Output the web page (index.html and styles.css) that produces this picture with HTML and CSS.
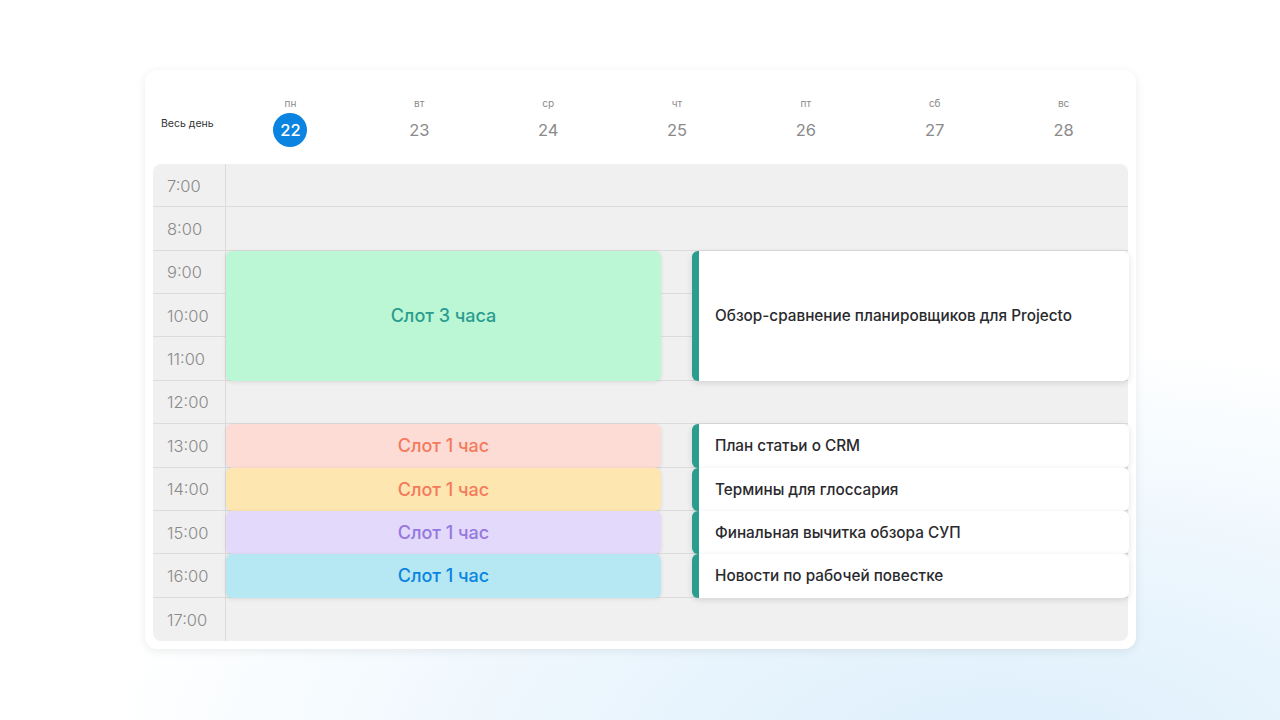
FILE: index.html
```html
<!DOCTYPE html>
<html lang="ru">
<head>
  <meta charset="UTF-8" />
  <meta name="viewport" content="width=device-width, initial-scale=1" />
  <title>Календарь | Неделя</title>
  <link rel="stylesheet" href="styles.css">
</head>
<body>

  <div class="calendar">
    <div class="week-head">
      <div class="allday">Весь день</div>
      <div class="day"><span class="dname">пн</span><span class="dnum today">22</span></div>
      <div class="day"><span class="dname">вт</span><span class="dnum">23</span></div>
      <div class="day"><span class="dname">ср</span><span class="dnum">24</span></div>
      <div class="day"><span class="dname">чт</span><span class="dnum">25</span></div>
      <div class="day"><span class="dname">пт</span><span class="dnum">26</span></div>
      <div class="day"><span class="dname">сб</span><span class="dnum">27</span></div>
      <div class="day"><span class="dname">вс</span><span class="dnum">28</span></div>
    </div>

    <div class="grid">
      <div class="row r1"></div>
      <div class="row r2"></div>
      <div class="row r3"></div>
      <div class="row r4"></div>
      <div class="row r5"></div>
      <div class="row r6"></div>
      <div class="row r7"></div>
      <div class="row r8"></div>
      <div class="row r9"></div>
      <div class="row r10"></div>
      <div class="row r11 last"></div>

      <div class="time r1">7:00</div>
      <div class="time r2">8:00</div>
      <div class="time r3">9:00</div>
      <div class="time r4">10:00</div>
      <div class="time r5">11:00</div>
      <div class="time r6">12:00</div>
      <div class="time r7">13:00</div>
      <div class="time r8">14:00</div>
      <div class="time r9">15:00</div>
      <div class="time r10">16:00</div>
      <div class="time r11">17:00</div>

      <!-- слоты -->
      <div class="slot green big">Слот 3 часа</div>
      <div class="slot pink s13">Слот 1 час</div>
      <div class="slot yellow s14">Слот 1 час</div>
      <div class="slot purple s15">Слот 1 час</div>
      <div class="slot cyan s16">Слот 1 час</div>

      <!-- задачи -->
      <div class="task big">Обзор-сравнение планировщиков для Projecto</div>
      <div class="task s13">План статьи о CRM</div>
      <div class="task s14">Термины для глоссария</div>
      <div class="task s15">Финальная вычитка обзора СУП</div>
      <div class="task s16">Новости по рабочей повестке</div>
    </div>
  </div>

</body>
</html>
```

FILE: styles.css
```css
:root {
  --fon: #f0f0f0;
  --linia: #dcdcdc;
  --seryj: #8a8a8a;
  --sinij: #0a84e0;
  --biruza: #2a9d8f;
}

* {
  box-sizing: border-box;
  margin: 0;
  padding: 0;
  font-family: 'Inter', 'Noto Sans', sans-serif;
}

body {
  width: 1280px;
  height: 720px;
  overflow: hidden;
  background: radial-gradient(ellipse 900px 420px at 1000px 760px, #ddeffc 0%, #eaf5fd 45%, #ffffff 100%);
  color: #222;
  padding: 70px 144px 0 145px;
}

.calendar {
  width: 991px;
  height: 579px;
  background: #fff;
  border-radius: 12px;
  box-shadow: 0 2px 10px rgba(0, 0, 0, 0.08);
  padding: 0 8px 8px 8px;
  display: flex;
  flex-direction: column;
}

.week-head {
  height: 94px;
  display: grid;
  grid-template-columns: 73px repeat(7, 1fr);
  align-items: center;
}

.allday {
  font-size: 10.5px;
  color: #333;
  padding-left: 8px;
  padding-top: 12px;
}

.day {
  display: flex;
  flex-direction: column;
  align-items: center;
  gap: 4px;
  padding-top: 10px;
}

.dname {
  font-size: 10px;
  color: var(--seryj);
}

.dnum {
  width: 34px;
  height: 34px;
  line-height: 34px;
  text-align: center;
  font-size: 16.5px;
  color: var(--seryj);
  font-weight: 400;
}

.dnum.today {
  background: var(--sinij);
  color: #fff;
  font-weight: 500;
  border-radius: 50%;
}

.grid {
  flex: 1;
  background: var(--fon);
  border-radius: 8px;
  display: grid;
  grid-template-columns: 73px 435px 31px 1fr;
  grid-template-rows: repeat(11, 1fr);
}

.row {
  grid-column: 1 / -1;
  border-bottom: 1px solid var(--linia);
}

.row.last {
  border-bottom: none;
}

.r1 { grid-row: 1; }
.r2 { grid-row: 2; }
.r3 { grid-row: 3; }
.r4 { grid-row: 4; }
.r5 { grid-row: 5; }
.r6 { grid-row: 6; }
.r7 { grid-row: 7; }
.r8 { grid-row: 8; }
.r9 { grid-row: 9; }
.r10 { grid-row: 10; }
.r11 { grid-row: 11; }

.time {
  grid-column: 1;
  border-right: 1px solid var(--linia);
  border-bottom: 1px solid var(--linia);
  font-size: 16.5px;
  font-weight: 300;
  color: var(--seryj);
  padding-left: 14px;
  padding-top: 1px;
  display: flex;
  align-items: center;
}

.time.r11 {
  border-bottom: none;
}

.slot {
  grid-column: 2;
  border-radius: 6px;
  display: flex;
  align-items: center;
  justify-content: center;
  font-size: 18px;
  font-weight: 500;
  box-shadow: 0 1px 4px rgba(0, 0, 0, 0.1);
}

.big { grid-row: 3 / span 3; }
.s13 { grid-row: 7; }
.s14 { grid-row: 8; }
.s15 { grid-row: 9; }
.s16 { grid-row: 10; }

.green { background: #bcf7d5; color: #2a9d8f; }
.pink { background: #fddcd5; color: #f47a5d; }
.yellow { background: #fee6b0; color: #f47a5d; }
.purple { background: #e2d9fb; color: #9577df; }
.cyan { background: #b5e8f3; color: #0a84e0; }

.task {
  grid-column: 4;
  margin-right: -1px;
  background: #fff;
  border-left: 7px solid var(--biruza);
  border-radius: 6px;
  box-shadow: 0 2px 6px rgba(0, 0, 0, 0.12);
  display: flex;
  align-items: center;
  padding-left: 16px;
  font-size: 15.3px;
  font-weight: 500;
  color: #2a2a2e;
}
```
